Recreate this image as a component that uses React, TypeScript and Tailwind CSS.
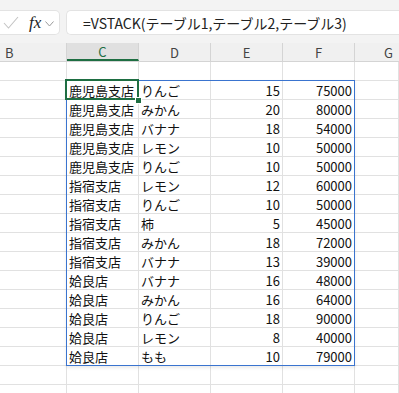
const rows: [string, string, number, number][] = [
  ["鹿児島支店", "りんご", 15, 75000],
  ["鹿児島支店", "みかん", 20, 80000],
  ["鹿児島支店", "バナナ", 18, 54000],
  ["鹿児島支店", "レモン", 10, 50000],
  ["鹿児島支店", "りんご", 10, 50000],
  ["指宿支店", "レモン", 12, 60000],
  ["指宿支店", "りんご", 10, 50000],
  ["指宿支店", "柿", 5, 45000],
  ["指宿支店", "みかん", 18, 72000],
  ["指宿支店", "バナナ", 13, 39000],
  ["姶良店", "バナナ", 16, 48000],
  ["姶良店", "みかん", 16, 64000],
  ["姶良店", "りんご", 18, 90000],
  ["姶良店", "レモン", 8, 40000],
  ["姶良店", "もも", 10, 79000],
];

const font = { fontFamily: '"Noto Sans CJK JP", "Noto Sans", sans-serif' };

function Cell({
  w,
  children,
  right,
}: {
  w: string;
  children?: React.ReactNode;
  right?: boolean;
}) {
  return (
    <div
      className={`${w} h-[19px] shrink-0 border-r border-b border-[#e1e1e1] flex items-center overflow-hidden whitespace-nowrap text-[13px] leading-none text-[#111] ${
        right ? "justify-end pr-[2px]" : "pl-[2px]"
      }`}
    >
      {children}
    </div>
  );
}

function FormulaBar() {
  return (
    <div className="h-[43px] bg-[#f3f3f3] pt-[10px] flex gap-[6px]">
      <div className="w-[60px] h-[25px] bg-white border border-l-0 border-[#e3e3e3] rounded-r-[5px] flex items-center">
        <svg width="16" height="14" viewBox="0 0 16 14" className="ml-[3px]">
          <polyline points="1,7 5.5,12 15,1" fill="none" stroke="#c4c4c4" strokeWidth="1.1" />
        </svg>
        <span
          className="ml-[10px] italic text-[17px] leading-none text-[#222]"
          style={{ fontFamily: '"Liberation Serif", serif' }}
        >
          fx
        </span>
        <svg width="9" height="6" viewBox="0 0 9 6" className="ml-[4px] mt-[2px]">
          <polyline points="0.5,0.5 4.5,5 8.5,0.5" fill="none" stroke="#9a9a9a" strokeWidth="1" />
        </svg>
      </div>
      <div className="flex-1 h-[25px] bg-white border border-r-0 border-[#e3e3e3] rounded-l-[5px] flex items-center pl-[16px]">
        <span className="text-[14px] leading-none text-[#222] whitespace-nowrap" style={font}>
          =VSTACK(テーブル1,テーブル2,テーブル3)
        </span>
      </div>
    </div>
  );
}

function HeaderRow() {
  const head = "h-[18px] shrink-0 flex items-center justify-center text-[13px] leading-none text-[#444] border-r border-[#d4d4d4]";
  return (
    <div className="flex bg-[#f0f0f0] border-b border-[#d4d4d4]">
      <div className={`${head} w-[67px] justify-start pl-[5px]`}>B</div>
      <div className="w-[72px] h-[18px] shrink-0 flex items-center justify-center bg-[#e0e0e0] border-b-2 border-[#1e6e42] text-[13px] leading-none text-[#1e6e42] border-r border-r-[#d4d4d4]">
        C
      </div>
      <div className={`${head} w-[72px]`}>D</div>
      <div className={`${head} w-[72px]`}>E</div>
      <div className={`${head} w-[72px]`}>F</div>
      <div className={`${head} flex-1 border-r-0 justify-start pl-[29px]`}>G</div>
    </div>
  );
}

function EmptyRow() {
  return (
    <div className="flex">
      <Cell w="w-[67px]" />
      <Cell w="w-[72px]" />
      <Cell w="w-[72px]" />
      <Cell w="w-[72px]" />
      <Cell w="w-[72px]" />
      <Cell w="flex-1" />
    </div>
  );
}

export default function App() {
  return (
    <div className="w-[399px] h-[393px] overflow-hidden bg-white" style={font}>
      <FormulaBar />
      <HeaderRow />
      <div className="relative">
        <EmptyRow />
        {rows.map(([branch, fruit, qty, amount], i) => (
          <div key={i} className="flex">
            <Cell w="w-[67px]" />
            <Cell w="w-[72px]">{branch}</Cell>
            <Cell w="w-[72px]">{fruit}</Cell>
            <Cell w="w-[72px]" right>
              {qty}
            </Cell>
            <Cell w="w-[72px]" right>
              {amount}
            </Cell>
            <Cell w="flex-1" />
          </div>
        ))}
        <EmptyRow />
        <EmptyRow />

        {/* spill range outline */}
        <div className="absolute left-[66px] top-[18px] w-[289px] h-[286px] border border-[#3a74cf] shadow-[0_2px_3px_rgba(0,0,0,0.08)] pointer-events-none" />
        {/* active cell */}
        <div className="absolute left-[65px] top-[17px] w-[74px] h-[21px] border-2 border-[#1e6e42] pointer-events-none" />
        <div className="absolute left-[135px] top-[35px] w-[5px] h-[5px] bg-[#1e6e42] border border-white box-content pointer-events-none" />
      </div>
    </div>
  );
}
